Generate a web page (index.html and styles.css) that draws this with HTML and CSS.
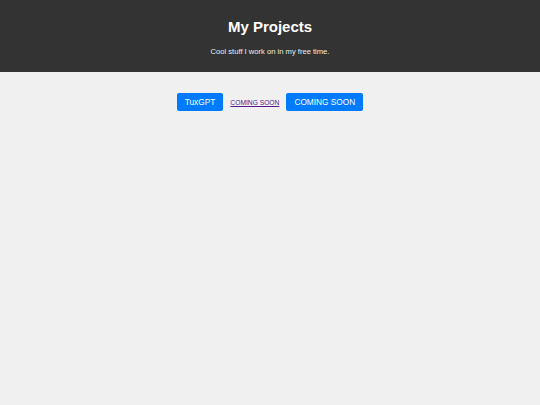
FILE: index.html
```html
<!DOCTYPE html>
<html lang="en">
<head>
  <meta charset="UTF-8" />
  <title>My Projects</title>
  <link rel="stylesheet" href="styles.css">
</head>
<body>
  <header class="header">
    <h1>My Projects</h1>
    <p>Cool stuff I work on in my free time.</p>
  </header>

  <div class="projects">
    <a class="btn" href="#">TuxGPT</a>
    <a class="small-link" href="">COMING SOON</a>
    <a class="btn big" href="#">COMING SOON</a>
  </div>
</body>
</html>
```

FILE: styles.css
```css
* {
  box-sizing: border-box;
}
body {
  margin: 0;
  background: #f0f0f0;
  font-family: 'Liberation Sans', Arial, sans-serif;
}
.header {
  background: #333;
  color: #fff;
  text-align: center;
  height: 72px;
  padding-top: 17px;
}
.header h1 {
  margin: 0;
  font-size: 15px;
  line-height: 20px;
}
.header p {
  margin: 10px 0 0;
  font-size: 7.6px;
  line-height: 10px;
  color: #eee;
}
.projects {
  display: flex;
  justify-content: center;
  align-items: center;
  gap: 7px;
  margin-top: 21px;
}
.btn {
  display: block;
  background: #007bff;
  color: #fff;
  text-decoration: none;
  font-size: 8.3px;
  line-height: 18px;
  height: 18px;
  padding: 0 8px;
  border-radius: 2px;
}
.small-link {
  color: #551a8b;
  font-size: 6.7px;
}
```
